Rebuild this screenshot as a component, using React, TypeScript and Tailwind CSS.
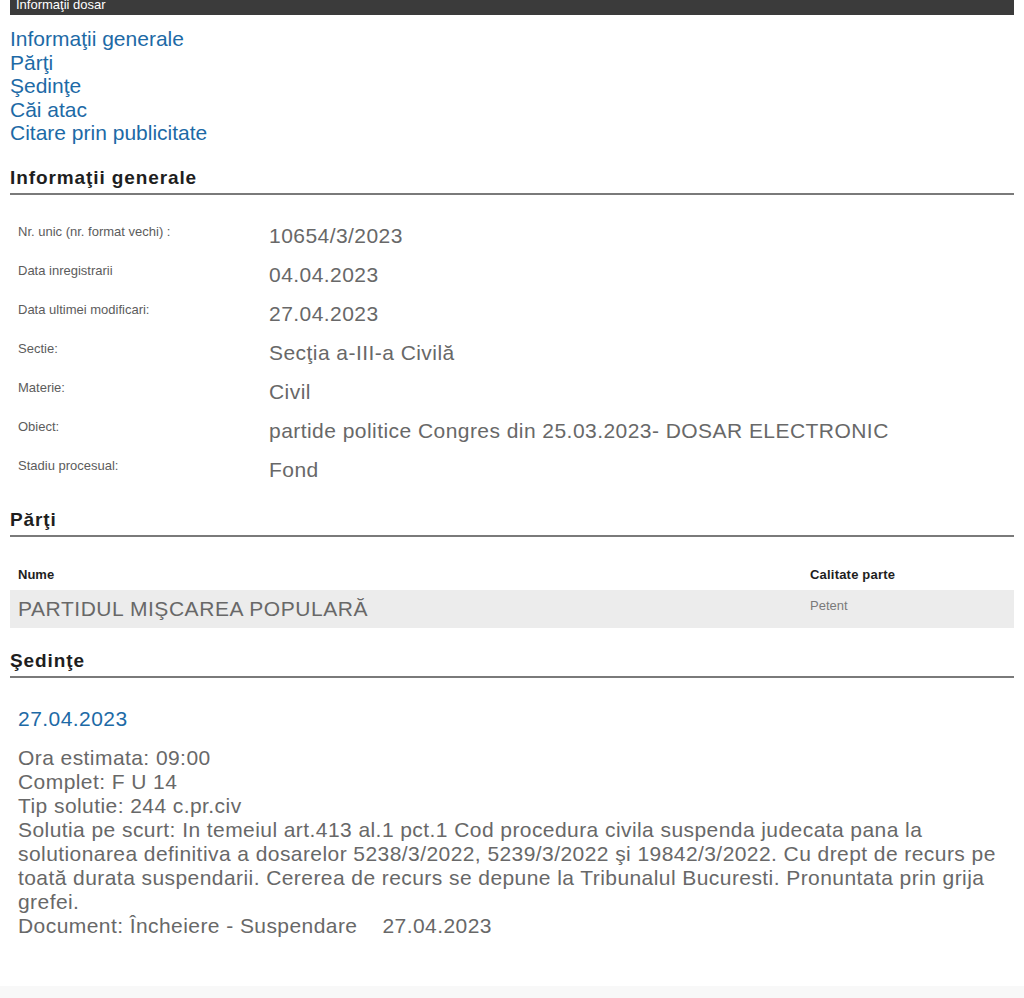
const font = "font-['Liberation_Sans',Arial,sans-serif]";

const navLinks = [
  "Informaţii generale",
  "Părţi",
  "Şedinţe",
  "Căi atac",
  "Citare prin publicitate",
];

const generalInfo = [
  { label: "Nr. unic (nr. format vechi) :", value: "10654/3/2023" },
  { label: "Data inregistrarii", value: "04.04.2023" },
  { label: "Data ultimei modificari:", value: "27.04.2023" },
  { label: "Sectie:", value: "Secţia a-III-a Civilă" },
  { label: "Materie:", value: "Civil" },
  { label: "Obiect:", value: "partide politice Congres din 25.03.2023- DOSAR ELECTRONIC" },
  { label: "Stadiu procesual:", value: "Fond" },
];

function SectionTitle({ children }: { children: React.ReactNode }) {
  return (
    <div className="border-b-2 border-[#7a7a7a] pb-[3px]">
      <h2 className="text-[19px] leading-[24px] font-bold tracking-[0.9px] text-[#1e1e1e]">
        {children}
      </h2>
    </div>
  );
}

export default function App() {
  return (
    <div className={`${font} bg-white min-h-[998px] flex flex-col`}>
      <div className="px-[10px]">
        {/* Top bar, scrolled so only its lower edge shows */}
        <div className="h-[15px] bg-[#3b3b3b] overflow-hidden pl-[6px]">
          <div className="text-[13px] leading-[13px] -mt-[2px] text-white">Informaţii dosar</div>
        </div>

        {/* Anchor links */}
        <nav className="mt-[12px] flex flex-col">
          {navLinks.map((l) => (
            <a key={l} href="#" className="text-[21px] leading-[23.5px] text-[#1d6aa6]">
              {l}
            </a>
          ))}
        </nav>

        {/* Informatii generale */}
        <div className="mt-[21px]">
          <SectionTitle>Informaţii generale</SectionTitle>
        </div>
        <div className="mt-[22px] flex flex-col">
          {generalInfo.map((r) => (
            <div key={r.label} className="h-[39px] grid grid-cols-[251px_1fr] items-center pl-[8px]">
              <div className="text-[13px] text-[#5c5c5c] mb-[8px]">{r.label}</div>
              <div className="text-[21px] text-[#686868] tracking-[0.45px]">{r.value}</div>
            </div>
          ))}
        </div>

        {/* Parti */}
        <div className="mt-[18px]">
          <SectionTitle>Părţi</SectionTitle>
        </div>
        <div className="mt-[26px] grid grid-cols-[792px_1fr] h-[24px] items-center pl-[8px] text-[13px] font-bold text-[#1e1e1e]">
          <div>Nume</div>
          <div className="tracking-[0.2px]">Calitate parte</div>
        </div>
        <div className="mt-[3px] h-[38px] bg-[#ececec] grid grid-cols-[792px_1fr] items-center pl-[8px]">
          <div className="text-[21px] text-[#686868] tracking-[0.55px]">PARTIDUL MIŞCAREA POPULARĂ</div>
          <div className="text-[13px] text-[#7a7a7a] mb-[6px]">Petent</div>
        </div>

        {/* Sedinte */}
        <div className="mt-[21px]">
          <SectionTitle>Şedinţe</SectionTitle>
        </div>
        <div className="pl-[8px] pr-[8px]">
          <div className="mt-[29px] text-[21px] leading-[24px] text-[#1d6aa6] tracking-[0.45px]">27.04.2023</div>
          <div className="mt-[15px] text-[21px] leading-[24px] text-[#686868] tracking-[0.43px]">
            <div>Ora estimata: 09:00</div>
            <div>Complet: F U 14</div>
            <div>Tip solutie: 244 c.pr.civ</div>
            <div>
              Solutia pe scurt: In temeiul art.413 al.1 pct.1 Cod procedura civila suspenda judecata pana la
              solutionarea definitiva a dosarelor 5238/3/2022, 5239/3/2022 şi 19842/3/2022. Cu drept de recurs pe
              toată durata suspendarii. Cererea de recurs se depune la Tribunalul Bucuresti. Pronuntata prin grija
              grefei.
            </div>
            <div>
              Document: Încheiere - Suspendare&nbsp;&nbsp;&nbsp; 27.04.2023
            </div>
          </div>
        </div>
      </div>
      <div className="flex-1" />
      <div className="h-[12px] bg-[#f8f8f8]" />
    </div>
  );
}
